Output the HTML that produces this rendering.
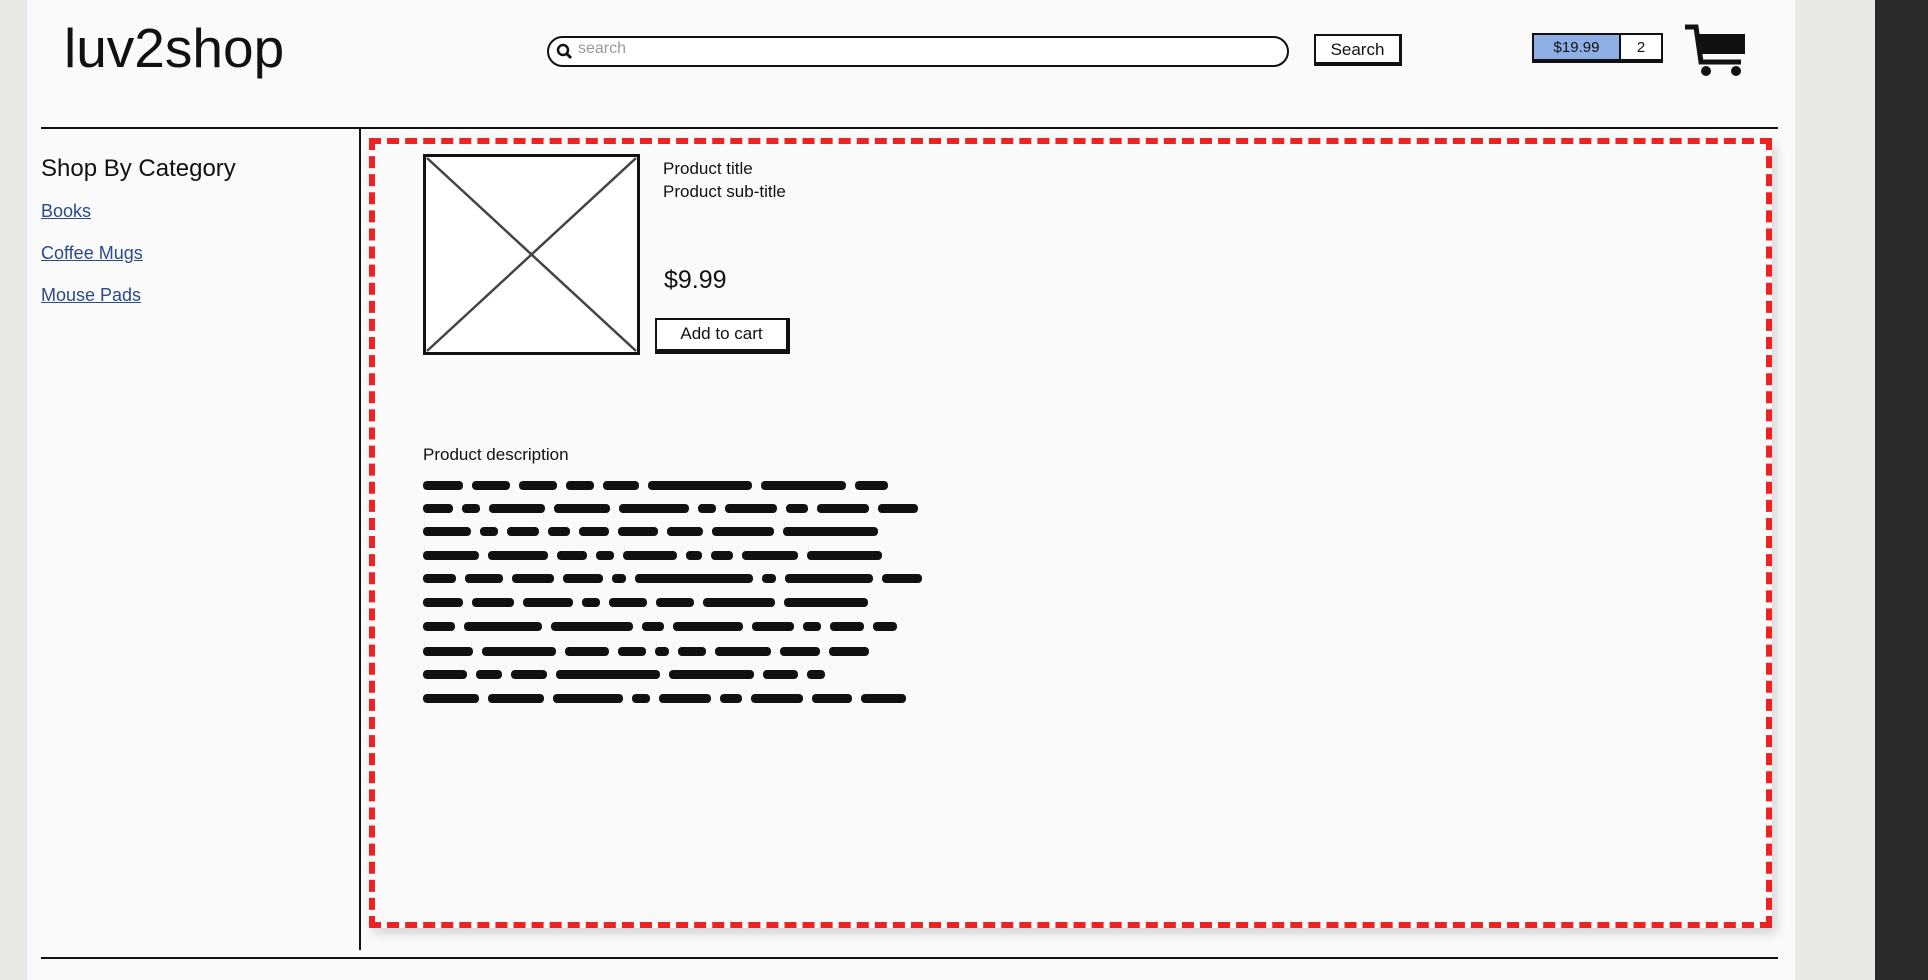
<!DOCTYPE html>
<html><head><meta charset="utf-8"><style>
*{margin:0;padding:0;box-sizing:border-box}
body{width:1928px;height:980px;background:#e9e8e4;position:relative;overflow:hidden;font-family:"Liberation Sans",sans-serif;color:#111}
.a{position:absolute}
#page{left:27px;top:0;width:1768px;height:980px;background:#fafafa}
#dark{left:1875px;top:0;width:53px;height:980px;background:#2b2b2b}
.ln{background:#111}
.lk{color:#2a4a8a;text-decoration:underline;font-size:18px}
.sl{position:absolute;left:423px;height:9px;display:flex;gap:9px}
.sl i{display:block;height:9px;background:#111;border-radius:4px}
</style></head><body>
<div class="a" id="page"></div>
<div class="a" id="dark"></div>
<div class="a" style="left:64px;top:16px;font-size:55px;letter-spacing:0px">luv2shop</div>
<div class="a" style="left:547px;top:36px;width:742px;height:31px;border:2.5px solid #111;border-radius:16px;background:#fff"></div>
<svg class="a" style="left:556px;top:43px" width="18" height="18" viewBox="0 0 18 18"><circle cx="7" cy="7" r="5" fill="none" stroke="#111" stroke-width="2.5"/><path d="M11 11L15 15" stroke="#111" stroke-width="3"/></svg>
<div class="a" style="left:578px;top:40px;font-size:16px;color:#999">search</div>
<div class="a" style="left:1314px;top:34px;width:88px;height:32px;border:2px solid #111;border-bottom-width:4px;border-right-width:3px;background:#fff;font-size:17px;text-align:center;line-height:27px">Search</div>
<div class="a" style="left:1532px;top:33px;width:131px;height:30px;border:2px solid #111;border-bottom-width:4px;display:flex;font-size:15px">
<div style="width:87px;background:#8eaee6;text-align:center;line-height:25px;border-right:2px solid #111">$19.99</div><div style="flex:1;background:#fff;text-align:center;line-height:25px">2</div></div>
<svg class="a" style="left:1683px;top:24px" width="64" height="54" viewBox="0 0 64 54"><path d="M2 3H13L18 38H58" fill="none" stroke="#111" stroke-width="5"/><path d="M16 10H62V30H19Z" fill="#111"/><circle cx="23" cy="47" r="5" fill="#111"/><circle cx="53" cy="47" r="5" fill="#111"/></svg>
<div class="a ln" style="left:41px;top:127px;width:1737px;height:2px"></div>
<div class="a ln" style="left:359px;top:128px;width:2px;height:822px"></div>
<div class="a ln" style="left:41px;top:957px;width:1737px;height:2px"></div>
<div class="a" style="left:41px;top:155px;font-size:24px">Shop By Category</div>
<div class="a lk" style="left:41px;top:201px">Books</div>
<div class="a lk" style="left:41px;top:243px">Coffee Mugs</div>
<div class="a lk" style="left:41px;top:285px">Mouse Pads</div>
<div class="a" style="left:369px;top:138px;width:1403px;height:790px;border:6px dashed #e22;box-shadow:4px 6px 10px rgba(0,0,0,.15)"></div>
<svg class="a" style="left:423px;top:154px" width="217" height="201"><rect x="1.5" y="1.5" width="214" height="198" fill="#fff" stroke="#111" stroke-width="3"/><path d="M4 4L213 197M213 4L4 197" stroke="#444" stroke-width="2.5"/></svg>
<div class="a" style="left:663px;top:157px;font-size:17px;line-height:23px">Product title<br>Product sub-title</div>
<div class="a" style="left:664px;top:266px;font-size:25px">$9.99</div>
<div class="a" style="left:655px;top:318px;width:135px;height:36px;border:2px solid #111;border-bottom-width:5px;border-right-width:4px;background:#fff;font-size:17px;text-align:center;line-height:28px">Add to cart</div>
<div class="a" style="left:423px;top:445px;font-size:17px">Product description</div>
<div class="sl" style="top:481px"><i style="width:40px"></i><i style="width:38px"></i><i style="width:38px"></i><i style="width:28px"></i><i style="width:36px"></i><i style="width:104px"></i><i style="width:85px"></i><i style="width:33px"></i></div>
<div class="sl" style="top:504px"><i style="width:30px"></i><i style="width:18px"></i><i style="width:56px"></i><i style="width:56px"></i><i style="width:70px"></i><i style="width:18px"></i><i style="width:52px"></i><i style="width:22px"></i><i style="width:52px"></i><i style="width:40px"></i></div>
<div class="sl" style="top:527px"><i style="width:48px"></i><i style="width:18px"></i><i style="width:32px"></i><i style="width:22px"></i><i style="width:30px"></i><i style="width:40px"></i><i style="width:36px"></i><i style="width:62px"></i><i style="width:95px"></i></div>
<div class="sl" style="top:551px"><i style="width:56px"></i><i style="width:60px"></i><i style="width:30px"></i><i style="width:18px"></i><i style="width:54px"></i><i style="width:16px"></i><i style="width:22px"></i><i style="width:56px"></i><i style="width:75px"></i></div>
<div class="sl" style="top:574px"><i style="width:33px"></i><i style="width:38px"></i><i style="width:42px"></i><i style="width:40px"></i><i style="width:14px"></i><i style="width:118px"></i><i style="width:14px"></i><i style="width:88px"></i><i style="width:40px"></i></div>
<div class="sl" style="top:598px"><i style="width:40px"></i><i style="width:42px"></i><i style="width:50px"></i><i style="width:18px"></i><i style="width:38px"></i><i style="width:38px"></i><i style="width:72px"></i><i style="width:84px"></i></div>
<div class="sl" style="top:622px"><i style="width:32px"></i><i style="width:78px"></i><i style="width:82px"></i><i style="width:22px"></i><i style="width:70px"></i><i style="width:42px"></i><i style="width:18px"></i><i style="width:34px"></i><i style="width:24px"></i></div>
<div class="sl" style="top:647px"><i style="width:50px"></i><i style="width:74px"></i><i style="width:44px"></i><i style="width:28px"></i><i style="width:14px"></i><i style="width:28px"></i><i style="width:56px"></i><i style="width:40px"></i><i style="width:40px"></i></div>
<div class="sl" style="top:670px"><i style="width:44px"></i><i style="width:26px"></i><i style="width:36px"></i><i style="width:104px"></i><i style="width:85px"></i><i style="width:35px"></i><i style="width:18px"></i></div>
<div class="sl" style="top:694px"><i style="width:56px"></i><i style="width:56px"></i><i style="width:70px"></i><i style="width:18px"></i><i style="width:52px"></i><i style="width:22px"></i><i style="width:52px"></i><i style="width:40px"></i><i style="width:45px"></i></div>
</body></html>
